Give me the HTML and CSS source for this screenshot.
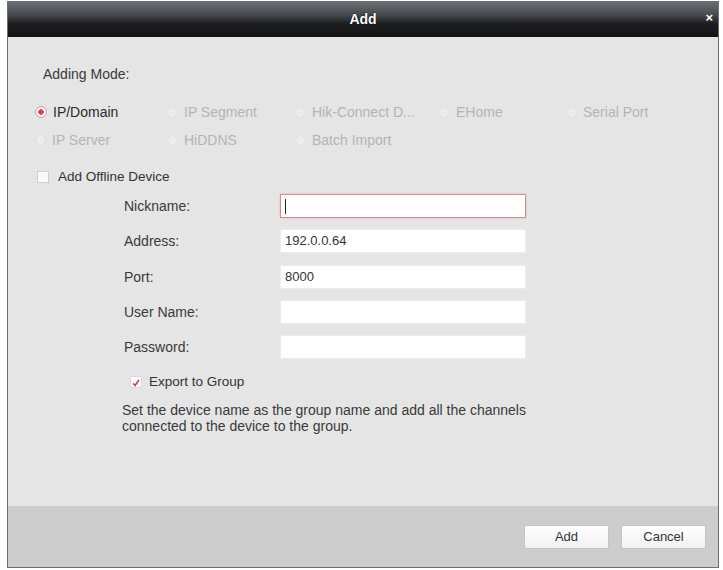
FILE: index.html
```html
<!DOCTYPE html>
<html lang="en">
<head>
  <meta charset="UTF-8">
  <meta name="viewport" content="width=device-width, initial-scale=1.0">
  <title>Add Device</title>
  <link rel="stylesheet" href="styles.css">
</head>
<body>
  <div class="dialog">
    <div class="titlebar">
      <span class="title">Add</span>
      <span class="close">&times;</span>
    </div>

    <div class="content">
      <div class="mode-label">Adding Mode:</div>

      <div class="modes">
        <label class="opt selected"><span class="radio"></span>IP/Domain</label>
        <label class="opt"><span class="radio"></span>IP Segment</label>
        <label class="opt"><span class="radio"></span>Hik-Connect D...</label>
        <label class="opt"><span class="radio"></span>EHome</label>
        <label class="opt"><span class="radio"></span>Serial Port</label>
        <label class="opt"><span class="radio"></span>IP Server</label>
        <label class="opt"><span class="radio"></span>HiDDNS</label>
        <label class="opt"><span class="radio"></span>Batch Import</label>
      </div>

      <label class="offline"><span class="check"></span>Add Offline Device</label>

      <div class="fields">
        <span class="lbl">Nickname:</span>
        <div class="field focused"><span class="caret"></span></div>
        <span class="lbl">Address:</span>
        <div class="field">192.0.0.64</div>
        <span class="lbl">Port:</span>
        <div class="field">8000</div>
        <span class="lbl">User Name:</span>
        <div class="field"></div>
        <span class="lbl">Password:</span>
        <div class="field"></div>
      </div>

      <label class="export">
        <span class="check on">
          <svg viewBox="0 0 12 12" width="12" height="12"><path d="M2.5 6.5 L5 9 L9.5 2.5" fill="none" stroke="#d43c40" stroke-width="2"/></svg>
        </span>
        Export to Group
      </label>
      <p class="note">Set the device name as the group name and add all the channels connected to the device to the group.</p>
    </div>

    <div class="footer">
      <button class="btn">Add</button>
      <button class="btn">Cancel</button>
    </div>
  </div>
</body>
</html>
```

FILE: styles.css
```css
body { margin: 0; background: #fff; font-family: "Liberation Sans", Arial, sans-serif; color: #333; }

.dialog { margin: 1px 0 0 7px; width: 710px; height: 566px; display: flex; flex-direction: column; background: #e5e5e5; border: 1px solid #6e6e6e; border-top: none; }

.titlebar { height: 36px; flex: none; display: flex; align-items: center; justify-content: center; position: relative;
  background: linear-gradient(to bottom, #6c6f74 0%, #45484d 40%, #1e1f21 62%, #131313 100%); }
.title { color: #fff; font-weight: bold; font-size: 14px; text-shadow: 0 0 2px #000; }
.close { position: absolute; right: 5px; top: 9px; color: #fff; font-size: 13px; font-weight: bold; }

.content { flex: 1; padding: 29px 0 0 27px; }
.mode-label { font-size: 14px; line-height: 16px; margin-left: 8px; color: #3a3a3a; }

.modes { display: grid; grid-template-columns: 132px 128px 144px 127px auto; row-gap: 12px; margin-top: 22px; }
.opt { display: flex; align-items: center; font-size: 14px; line-height: 16px; color: #b4b4b4; }
.opt .radio { width: 11px; height: 11px; border-radius: 50%; border: 1px solid #dedede; background: #ececec; margin-right: 6px; box-sizing: border-box; }
.opt.selected { color: #2a2a2a; }
.opt.selected .radio { width: 12px; height: 12px; border-color: #e2959a; background: radial-gradient(circle, #d9424a 0 2.5px, #fff 3px); }

.offline { display: flex; align-items: center; margin: 21px 0 0 2px; font-size: 13.5px; line-height: 16px; color: #333; }
.check { width: 12px; height: 12px; box-sizing: border-box; border: 1px solid #cfcfcf; background: #fafafa; margin-right: 9px; display: flex; }
.check.on { border-color: #d8d8d8; background: #fff; margin-right: 7px; }

.fields { display: grid; grid-template-columns: 156px 246px; row-gap: 11.3px; margin: 9px 0 0 89px; align-items: center; }
.lbl { font-size: 14px; color: #3a3a3a; }
.field { height: 24px; box-sizing: border-box; background: #fff; border: 1px solid #ececec; font-size: 13px; line-height: 22px; padding-left: 4px; color: #333; display: flex; align-items: center; }
.field.focused { border-color: #d48a8f; box-shadow: 0 0 2px #f0b9bc; }
.caret { width: 1px; height: 15px; background: #222; }

.export { display: flex; align-items: center; margin: 15px 0 0 95px; font-size: 13.5px; line-height: 16px; }
.note { margin: 12px 0 0 87px; width: 440px; font-size: 14px; line-height: 16px; color: #3a3a3a; }

.footer { height: 61px; flex: none; background: #cdcdcd; display: flex; justify-content: flex-end; align-items: center; gap: 12px; padding-right: 12px; }
.btn { width: 85px; height: 24px; border: 1px solid #c4c4c4; border-radius: 2px; background: linear-gradient(#fff, #f1f1f1); font-family: "Liberation Sans", Arial, sans-serif; font-size: 13px; color: #333; }
```
